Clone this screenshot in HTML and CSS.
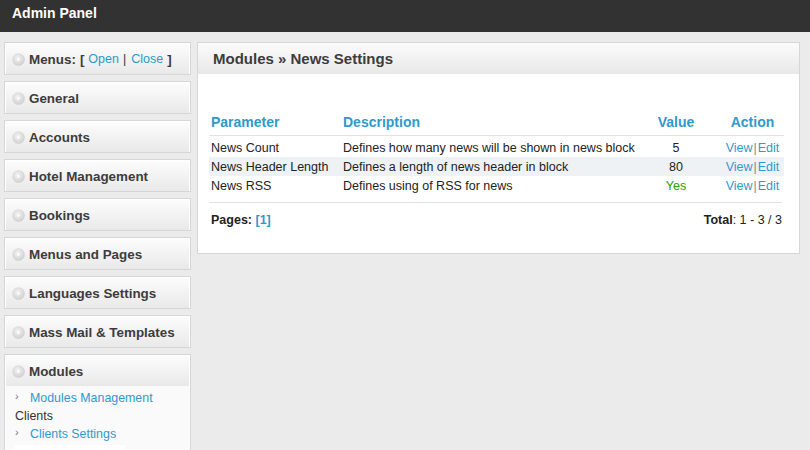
FILE: index.html
```html
<!DOCTYPE html>
<html>
<head>
<meta charset="utf-8">
<link rel="stylesheet" href="styles.css">
</head>
<body>
<div class="topbar">Admin Panel</div>
<div class="layout">
  <aside class="sidebar">
    <div class="box"><div class="box-head"><span class="dot"><svg viewBox="0 0 13 13" width="13" height="13"><defs><radialGradient id="g" cx="45%" cy="40%" r="60%"><stop offset="0" stop-color="#f4f4f4"/><stop offset="1" stop-color="#cfcfcf"/></radialGradient></defs><circle cx="6.5" cy="6.5" r="6.3" fill="url(#g)"/><path d="M5.5 4.5 L8 6.5 L5.5 8.5 Z" fill="#fff"/></svg></span>Menus:<span class="br">[</span><a class="lnk mo">Open</a><span class="sep">|</span><a class="lnk mc">Close</a><span class="br2">]</span></div></div>
    <div class="box"><div class="box-head"><span class="dot"><svg viewBox="0 0 13 13" width="13" height="13"><circle cx="6.5" cy="6.5" r="6.3" fill="url(#g)"/><path d="M5.5 4.5 L8 6.5 L5.5 8.5 Z" fill="#fff"/></svg></span>General</div></div>
    <div class="box"><div class="box-head"><span class="dot"><svg viewBox="0 0 13 13" width="13" height="13"><circle cx="6.5" cy="6.5" r="6.3" fill="url(#g)"/><path d="M5.5 4.5 L8 6.5 L5.5 8.5 Z" fill="#fff"/></svg></span>Accounts</div></div>
    <div class="box"><div class="box-head"><span class="dot"><svg viewBox="0 0 13 13" width="13" height="13"><circle cx="6.5" cy="6.5" r="6.3" fill="url(#g)"/><path d="M5.5 4.5 L8 6.5 L5.5 8.5 Z" fill="#fff"/></svg></span>Hotel Management</div></div>
    <div class="box"><div class="box-head"><span class="dot"><svg viewBox="0 0 13 13" width="13" height="13"><circle cx="6.5" cy="6.5" r="6.3" fill="url(#g)"/><path d="M5.5 4.5 L8 6.5 L5.5 8.5 Z" fill="#fff"/></svg></span>Bookings</div></div>
    <div class="box"><div class="box-head"><span class="dot"><svg viewBox="0 0 13 13" width="13" height="13"><circle cx="6.5" cy="6.5" r="6.3" fill="url(#g)"/><path d="M5.5 4.5 L8 6.5 L5.5 8.5 Z" fill="#fff"/></svg></span>Menus and Pages</div></div>
    <div class="box"><div class="box-head"><span class="dot"><svg viewBox="0 0 13 13" width="13" height="13"><circle cx="6.5" cy="6.5" r="6.3" fill="url(#g)"/><path d="M5.5 4.5 L8 6.5 L5.5 8.5 Z" fill="#fff"/></svg></span>Languages Settings</div></div>
    <div class="box"><div class="box-head"><span class="dot"><svg viewBox="0 0 13 13" width="13" height="13"><circle cx="6.5" cy="6.5" r="6.3" fill="url(#g)"/><path d="M5.5 4.5 L8 6.5 L5.5 8.5 Z" fill="#fff"/></svg></span>Mass Mail &amp; Templates</div></div>
    <div class="box open"><div class="box-head"><span class="dot"><svg viewBox="0 0 13 13" width="13" height="13"><circle cx="6.5" cy="6.5" r="6.3" fill="url(#g)"/><path d="M5.5 4.5 L8 6.5 L5.5 8.5 Z" fill="#fff"/></svg></span>Modules</div>
      <ul class="submenu">
        <li class="item"><span class="arr">›</span><a class="lnk">Modules Management</a></li>
        <li class="group">Clients</li>
        <li class="item"><span class="arr">›</span><a class="lnk">Clients Settings</a></li>
        <li class="blank"></li>
      </ul>
    </div>
  </aside>
  <main class="panel">
    <div class="panel-head">Modules » News Settings</div>
    <div class="panel-body">
      <table class="grid">
        <colgroup><col class="c1"><col class="c2"><col class="c3"><col class="c4"></colgroup>
        <thead>
          <tr><th class="left">Parameter</th><th class="left">Description</th><th>Value</th><th>Action</th></tr>
        </thead>
        <tbody>
          <tr class="first"><td>News Count</td><td>Defines how many news will be shown in news block</td><td class="center">5</td><td class="center"><a class="lnk">View</a><span class="bar">|</span><a class="lnk">Edit</a></td></tr>
          <tr class="alt"><td>News Header Length</td><td>Defines a length of news header in block</td><td class="center">80</td><td class="center"><a class="lnk">View</a><span class="bar">|</span><a class="lnk">Edit</a></td></tr>
          <tr><td>News RSS</td><td>Defines using of RSS for news</td><td class="center yes">Yes</td><td class="center"><a class="lnk">View</a><span class="bar">|</span><a class="lnk">Edit</a></td></tr>
        </tbody>
      </table>
      <div class="pager">
        <div><b>Pages:</b> <a class="lnk strong">[1]</a></div>
        <div><b>Total</b>: 1 - 3 / 3</div>
      </div>
    </div>
  </main>
</div>
</body>
</html>
```

FILE: styles.css
```css
html, body {
  margin: 0;
  padding: 0;
  overflow: hidden;
}
body {
  background: #ebebeb;
  font-family: "Liberation Sans", Arial, sans-serif;
  font-size: 12.5px;
  color: #222;
  height: 450px;
}
.topbar {
  height: 32px;
  background: #323232;
  color: #fff;
  font-weight: bold;
  font-size: 14px;
  line-height: 27px;
  padding-left: 12px;
}
.layout {
  display: flex;
  align-items: flex-start;
  padding: 10px 10px 0 4px;
  gap: 6px;
  height: 408px;
  overflow: hidden;
}
.sidebar {
  width: 187px;
  flex: none;
  display: flex;
  flex-direction: column;
  gap: 6px;
}
.box {
  border: 1px solid #d6d6d6;
  box-shadow: inset 0 0 0 1px #fdfdfd;
  background: #fafafa;
}
.box-head {
  height: 30px;
  display: flex;
  align-items: center;
  padding-left: 6px;
  background: linear-gradient(#fcfcfc, #e9e9e9);
  border: 1px solid #fff;
  border-width: 1px 1px 0 1px;
  font-weight: bold;
  font-size: 13.4px;
  color: #3c3c3c;
}
.dot {
  width: 13px;
  height: 13px;
  margin-right: 4px;
  display: flex;
}
.br { margin-left: 4px; }
.br2 { margin-left: 4px; }
.box-head .lnk {
  font-weight: normal;
  font-size: 12.5px;
}
.box-head .mo { margin-left: 4px; }
.box-head .mc { margin-left: 5px; }
.sep {
  font-weight: normal;
  font-size: 12.5px;
  color: #333;
  margin-left: 4px;
}
.lnk {
  color: #2e99cc;
  text-decoration: none;
}
.open {
  height: 110px;
}
.submenu {
  list-style: none;
  margin: 0;
  padding: 3px 0 0 10px;
  font-size: 12.4px;
  line-height: 18px;
}
.submenu .item {
  display: flex;
}
.arr {
  color: #777;
  font-size: 11px;
  width: 15px;
  line-height: 14px;
}
.group {
  color: #333;
}
.blank {
  width: 110px;
  height: 12px;
  background: #fff;
  margin-top: 2px;
}
.panel {
  flex: 1;
  background: #fff;
  border: 1px solid #d6d6d6;
  height: 210px;
}
.panel-head {
  height: 31px;
  line-height: 31px;
  padding-left: 15px;
  background: linear-gradient(#fbfbfb, #e8e8e8);
  font-weight: bold;
  font-size: 15px;
  color: #3c3c3c;
}
.panel-body {
  padding: 38px 15px 0 11px;
}
.grid {
  width: 575px;
  border-collapse: collapse;
  table-layout: fixed;
}
.c1 { width: 132px; }
.c2 { width: 290px; }
.c3 { width: 90px; }
.c4 { width: 63px; }
.grid th {
  color: #2e99cc;
  font-size: 14px;
  font-weight: bold;
  height: 20px;
  padding: 0 2px 3px;
  border-bottom: 1px solid #e2e2e2;
  text-align: center;
}
.grid th.left { text-align: left; }
.grid td {
  height: 19px;
  padding: 0 2px;
  white-space: nowrap;
}
.grid .first td { height: 19px; padding-top: 2px; }
.grid .alt td { background: #eef2f4; }
.center { text-align: center; }
.yes { color: #2a9a0e; }
.bar {
  color: #888;
  margin: 0 1px;
}
.pager {
  margin-top: 7px;
  border-top: 1px solid #e2e2e2;
  width: 571px;
  padding: 10px 0 0 2px;
  display: flex;
  justify-content: space-between;
  color: #222;
}
.strong { font-weight: bold; }
```
